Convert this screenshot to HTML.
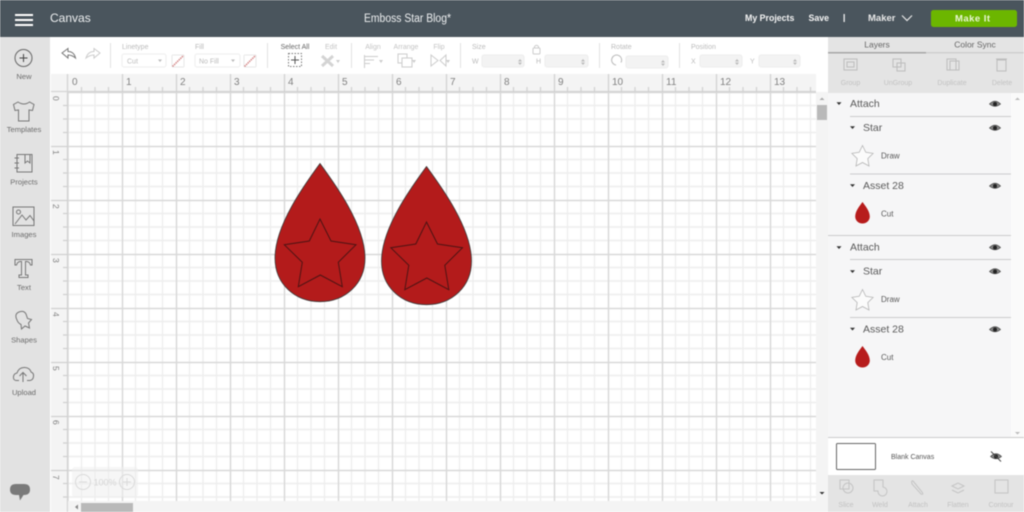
<!DOCTYPE html>
<html><head><meta charset="utf-8"><style>
html,body{margin:0;padding:0;width:1024px;height:512px;overflow:hidden;background:#fff}
svg{display:block;font-family:"Liberation Sans",sans-serif;filter:blur(.4px)}
.n{font-size:7.6px;fill:#6c6c6c;text-anchor:middle}
.t{font-size:7px;fill:#bbb}
.d{font-size:7px;fill:#c4c4c4;text-anchor:middle}
.ic{fill:none;stroke:#777;stroke-width:1}
.la{font-size:10.5px;fill:#5a5a5a}
.lb{font-size:8px;fill:#5a5a5a}
</style></head><body>
<svg width="1024" height="512" viewBox="0 0 1024 512" xmlns="http://www.w3.org/2000/svg">
<defs>
<g id="eye"><path d="M-5.500 0Q0 -5.500 5.500 0Q0 4.500 -5.500 0Z" fill="#888" stroke="#444" stroke-width=".7"/><circle r="2" fill="#222"/></g>
<path id="tri" d="M-2.500 -1.300H2.500L0 1.500Z" fill="#333"/>
<path id="starS" d="M0 -10L3.300 -3.200L10.600 -2.100L5.300 3.100L6.500 10.500L0 7L-6.500 10.500L-5.300 3.100L-10.600 -2.100L-3.300 -3.200Z" fill="#fbfbfb" stroke="#b5b5b5" stroke-width=".8"/>
<path id="dropS" d="M0 -11C-2.500 -7.500 -7.300 -2 -7.300 3.500C-7.300 7.500 -4 10.500 0 10.500C4 10.500 7.300 7.500 7.300 3.500C7.300 -2 2.500 -7.500 0 -11Z" fill="#b71c1c"/>
</defs>

<!-- canvas -->
<rect x="51" y="74" width="765" height="438" fill="#fff"/>
<path stroke="#eeeeee" stroke-width="1.400" fill="none" d="M81.500 92V512M95 92V512M108.500 92V512M135.500 92V512M149 92V512M162.500 92V512M189.500 92V512M203 92V512M216.500 92V512M243.500 92V512M257 92V512M270.500 92V512M297.500 92V512M311 92V512M324.500 92V512M351.500 92V512M365 92V512M378.500 92V512M405.500 92V512M419 92V512M432.500 92V512M459.500 92V512M473 92V512M486.500 92V512M513.500 92V512M527 92V512M540.500 92V512M567.500 92V512M581 92V512M594.500 92V512M621.500 92V512M635 92V512M648.500 92V512M675.500 92V512M689 92V512M702.500 92V512M729.500 92V512M743 92V512M756.500 92V512M783.500 92V512M797 92V512M810.500 92V512
M68 105.500H816M68 119H816M68 132.500H816M68 159.500H816M68 173H816M68 186.500H816M68 213.500H816M68 227H816M68 240.500H816M68 267.500H816M68 281H816M68 294.500H816M68 321.500H816M68 335H816M68 348.500H816M68 375.500H816M68 389H816M68 402.500H816M68 429.500H816M68 443H816M68 456.500H816M68 483.500H816M68 497H816"/>
<path stroke="#d9d9d9" stroke-width="1.500" fill="none" d="M68 92V512M122.500 92V512M176.500 92V512M230.500 92V512M284.500 92V512M338.500 92V512M392.500 92V512M446.500 92V512M500.500 92V512M554.500 92V512M608.500 92V512M662.500 92V512M716.500 92V512M770.500 92V512
M68 92.500H816M68 146.500H816M68 200.500H816M68 254.500H816M68 308.500H816M68 362.500H816M68 416.500H816M68 470.500H816"/>

<!-- rulers -->
<rect x="51" y="74" width="765" height="18" fill="#f4f4f4"/>
<rect x="51" y="74" width="17" height="438" fill="#f4f4f4"/>
<path stroke="#d4d4d4" stroke-width="1.300" fill="none" d="M51 91.500H816M67.500 74V512"/>
<path stroke="#d0d0d0" stroke-width="1.200" fill="none" d="M122.500 74V92M176.500 74V92M230.500 74V92M284.500 74V92M338.500 74V92M392.500 74V92M446.500 74V92M500.500 74V92M554.500 74V92M608.500 74V92M662.500 74V92M716.500 74V92M770.500 74V92
M81.500 87V92M95 87V92M108.500 87V92M135.500 87V92M149 87V92M162.500 87V92M189.500 87V92M203 87V92M216.500 87V92M243.500 87V92M257 87V92M270.500 87V92M297.500 87V92M311 87V92M324.500 87V92M351.500 87V92M365 87V92M378.500 87V92M405.500 87V92M419 87V92M432.500 87V92M459.500 87V92M473 87V92M486.500 87V92M513.500 87V92M527 87V92M540.500 87V92M567.500 87V92M581 87V92M594.500 87V92M621.500 87V92M635 87V92M648.500 87V92M675.500 87V92M689 87V92M702.500 87V92M729.500 87V92M743 87V92M756.500 87V92M783.500 87V92M797 87V92M810.500 87V92
M51 146.500H68M51 200.500H68M51 254.500H68M51 308.500H68M51 362.500H68M51 416.500H68M51 470.500H68
M63 105.500H68M63 119H68M63 132.500H68M63 159.500H68M63 173H68M63 186.500H68M63 213.500H68M63 227H68M63 240.500H68M63 267.500H68M63 281H68M63 294.500H68M63 321.500H68M63 335H68M63 348.500H68M63 375.500H68M63 389H68M63 402.500H68M63 429.500H68M63 443H68M63 456.500H68M63 483.500H68M63 497H68"/>
<g font-size="10" fill="#808080">
<text x="72" y="85">0</text><text x="126" y="85">1</text><text x="180" y="85">2</text><text x="234" y="85">3</text><text x="288" y="85">4</text><text x="342" y="85">5</text><text x="396" y="85">6</text><text x="450" y="85">7</text><text x="504" y="85">8</text><text x="558" y="85">9</text><text x="612" y="85">10</text><text x="666" y="85">11</text><text x="720" y="85">12</text><text x="774" y="85">13</text>
</g>
<g font-size="8.500" fill="#808080">
<text transform="translate(53,96) rotate(90)">0</text><text transform="translate(53,150) rotate(90)">1</text><text transform="translate(53,204) rotate(90)">2</text><text transform="translate(53,258) rotate(90)">3</text><text transform="translate(53,312) rotate(90)">4</text><text transform="translate(53,366) rotate(90)">5</text><text transform="translate(53,420) rotate(90)">6</text><text transform="translate(53,475) rotate(90)">7</text>
</g>

<!-- design -->
<g stroke="#3a3a3a" stroke-width=".8" fill="#b31b1b">
<path d="M320 163.500C305 184 275 225 275 258C275 284 295 301.700 320 301.700C345 301.700 365 284 365 258C365 225 335 184 320 163.500Z"/>
<path transform="translate(106.500,3)" d="M320 163.500C305 184 275 225 275 258C275 284 295 301.700 320 301.700C345 301.700 365 284 365 258C365 225 335 184 320 163.500Z"/>
</g>
<g stroke="#4e1414" stroke-width="1" fill="none">
<path d="M320 219L331 241L356 244.700L338.300 262.300L342.300 286.700L320.300 275L298.300 286.700L302.300 262.300L284.300 244.700L309.300 241Z"/>
<path transform="translate(106.500,3)" d="M320 219L331 241L356 244.700L338.300 262.300L342.300 286.700L320.300 275L298.300 286.700L302.300 262.300L284.300 244.700L309.300 241Z"/>
</g>

<!-- zoom overlay -->
<rect x="72" y="467" width="66" height="30" rx="3" fill="#eee" opacity=".55"/>
<g fill="none" stroke="#dadada"><circle cx="83" cy="482" r="7.500"/><circle cx="127" cy="482" r="7.500"/><path d="M79 482H87M123 482H131M127 478V486"/></g>
<text x="105" y="485.500" font-size="9" fill="#d6d6d6" text-anchor="middle">100%</text>

<!-- h scrollbar -->
<rect x="68" y="501" width="748" height="11" fill="#f4f4f4"/>
<rect x="81" y="503" width="52" height="9" fill="#b9b9b9"/>
<path d="M75 507L78 504.500V509.500Z" fill="#888"/>

<!-- v scrollbar -->
<rect x="816" y="92" width="12" height="420" fill="#f4f4f4"/>
<rect x="817" y="105" width="10" height="15" fill="#b9b9b9"/>
<path d="M822 97.500L819.500 100H824.500Z" fill="#aaa"/>
<path d="M822 494.500L819.500 492H824.500Z" fill="#333"/>

<!-- left sidebar -->
<rect x="0" y="37" width="50" height="475" fill="#e2e2e2"/>
<circle cx="23.500" cy="58" r="8.500" fill="none" stroke="#666" stroke-width="1"/>
<path d="M19.500 58H27.500M23.500 54V62" stroke="#444" fill="none"/>
<text class="n" x="24" y="79">New</text>
<path class="ic" d="M18 102L13.500 104.500L15 110.500L18.500 110V121H29V110L32.500 110.500L34 104.500L29.500 102Q24 106 18 102Z"/>
<text class="n" x="24" y="132">Templates</text>
<path class="ic" d="M17 154.500H32V172H17ZM25 154.500V163L27.500 161L30 163V154.500M14.500 158H19M14.500 163H19M14.500 168H19"/>
<text class="n" x="24" y="184.500">Projects</text>
<rect class="ic" x="13" y="207" width="21" height="18.500"/>
<circle class="ic" cx="18.500" cy="212" r="2"/>
<path class="ic" d="M15 224L22 215L26 220L30 215.500L34 221"/>
<text class="n" x="24" y="237">Images</text>
<path class="ic" d="M15 259.500H32V265H30.500Q29.500 261.500 26.500 261.500H25.500V275H28V277.500H19V275H21.500V261.500H20.500Q17.500 261.500 16.500 265H15Z"/>
<text class="n" x="24" y="290">Text</text>
<path class="ic" d="M17 320Q14 314 19 312Q24 310 26 314L27.500 318.500L31.500 319.500L28.500 323L29.500 328L25 326L21.500 329L21 324.500Q18 323 17 320Z"/>
<text class="n" x="24" y="342.500">Shapes</text>
<path class="ic" d="M19 380.500H16Q13 380 13.500 376.500Q14 373.500 17 373Q19 367 25 367.500Q30 368 31 372Q34 373 33.500 376.500Q33 380 30 380.500H27M23 382V373M19.500 376L23 372.500L26.500 376"/>
<text class="n" x="24" y="395">Upload</text>
<path d="M16 484H24Q30 484 30 489.500Q30 495 24 495H23.500L20 500.500L19 495H16Q10 495 10 489.500Q10 484 16 484Z" fill="#7a7a7a"/>

<!-- toolbar -->
<rect x="50" y="37" width="778" height="37" fill="#fff"/>
<path d="M110.500 43V68M267.500 43V68M351.500 43V68M460.500 43V68M599.500 43V68M679.500 43V68" stroke="#e2e2e2" fill="none"/>
<path d="M62 53L68 48.500V51.500Q74 51.500 75.500 58Q72 55 68 55V58Z" fill="#fff" stroke="#777"/>
<path d="M100 53L94 48.500V51.500Q88 51.500 86 58Q90 55 94 55V58Z" fill="#fff" stroke="#ccc"/>
<text class="t" x="122" y="49">Linetype</text>
<rect x="122" y="54" width="44" height="13" rx="2" fill="#fff" stroke="#eee"/>
<text class="t" x="127" y="63.500">Cut</text>
<path d="M158 59.500H162L160 62Z" fill="#bbb"/>
<rect x="172" y="55" width="12" height="12" rx="1" fill="#fff" stroke="#e8e8e8"/>
<path d="M172.500 66.500L183.500 55.500" stroke="#d58a8a" stroke-width="1.500" stroke-dasharray="1.500 .7"/>
<text class="t" x="195" y="49">Fill</text>
<rect x="195" y="54" width="45" height="13" rx="2" fill="#fff" stroke="#eee"/>
<text class="t" x="199" y="63.500">No Fill</text>
<path d="M231 59.500H235L233 62Z" fill="#bbb"/>
<rect x="244" y="55" width="12" height="12" rx="1" fill="#fff" stroke="#e8e8e8"/>
<path d="M244.500 66.500L255.500 55.500" stroke="#d58a8a" stroke-width="1.500" stroke-dasharray="1.500 .7"/>
<text x="295" y="49" font-size="7" fill="#666" text-anchor="middle">Select All</text>
<rect x="288.500" y="53.500" width="13" height="13" fill="none" stroke="#777" stroke-dasharray="1.500 1.500"/>
<path d="M291 60H299M295 56V64" stroke="#555" fill="none"/>
<text class="d" x="331" y="49">Edit</text>
<path d="M322 56L333 66M333 56L322 66" stroke="#d4d4d4" stroke-width="3" fill="none"/>
<path d="M336 60H340L338 63Z" fill="#ccc"/>
<text class="d" x="373" y="49">Align</text>
<path d="M365 56.500H378M365 60H374M365 63.500H370M364.500 55V68" stroke="#ccc" fill="none"/>
<path d="M379 60H383L381 63Z" fill="#ccc"/>
<text class="d" x="406" y="49">Arrange</text>
<rect x="398" y="54" width="9" height="9" fill="none" stroke="#ccc"/><rect x="402" y="58" width="10" height="9" fill="#fff" stroke="#ccc"/>
<path d="M412 60H416L414 63Z" fill="#ccc"/>
<text class="d" x="439" y="49">Flip</text>
<path d="M431 55V66L438 60.500ZM446 55V66L440 60.500Z" fill="none" stroke="#ccc"/>
<path d="M446 60H450L448 63Z" fill="#ccc"/>
<text class="t" x="472" y="49">Size</text>
<text class="t" x="472" y="63.500">W</text>
<rect x="482" y="55" width="42" height="12" rx="2" fill="#f3f3f3" stroke="#eee"/>
<path d="M520 59L518 61.500H522ZM520 65L518 62.500H522Z" fill="#bbb"/>
<rect x="533" y="48" width="7" height="6" rx="1" fill="none" stroke="#ccc"/><path d="M534.500 48V46.500Q536.500 44 538.500 46.500V48" fill="none" stroke="#ccc"/>
<text class="t" x="536" y="63.500">H</text>
<rect x="545" y="55" width="43" height="12" rx="2" fill="#f3f3f3" stroke="#eee"/>
<path d="M583 59L581 61.500H585ZM583 65L581 62.500H585Z" fill="#bbb"/>
<text class="t" x="611" y="49">Rotate</text>
<path d="M621 62.500A5 5 0 1 0 616 65" fill="none" stroke="#bbb"/>
<rect x="626" y="56" width="42" height="12" rx="2" fill="#f3f3f3" stroke="#eee"/>
<path d="M663 60L661 62.500H665ZM663 66L661 63.500H665Z" fill="#bbb"/>
<text class="t" x="691" y="49">Position</text>
<text class="t" x="691" y="63.500">X</text>
<rect x="700" y="55" width="42" height="12" rx="2" fill="#f3f3f3" stroke="#eee"/>
<path d="M737 59L735 61.500H739ZM737 65L735 62.500H739Z" fill="#bbb"/>
<text class="t" x="750" y="63.500">Y</text>
<rect x="759" y="55" width="41" height="12" rx="2" fill="#f3f3f3" stroke="#eee"/>
<path d="M795 59L793 61.500H797ZM795 65L793 62.500H797Z" fill="#bbb"/>

<!-- header -->
<rect x="0" y="0" width="1024" height="37" fill="#4a555d"/>
<rect x="15" y="14" width="18" height="2" fill="#fff"/><rect x="15" y="19" width="18" height="2" fill="#fff"/><rect x="15" y="24" width="18" height="2" fill="#fff"/>
<text x="50" y="22" font-size="12" fill="#eef0f1">Canvas</text>
<text x="364" y="22" font-size="11.500" fill="#eef0f1" textLength="87" lengthAdjust="spacingAndGlyphs">Emboss Star Blog*</text>
<text x="745" y="21" font-size="8.800" font-weight="bold" fill="#f4f4f4">My Projects</text>
<text x="808.500" y="21" font-size="8.800" font-weight="bold" fill="#f4f4f4">Save</text>
<rect x="843.500" y="14" width="1.300" height="8" fill="#eee"/>
<text x="868" y="21" font-size="9.500" font-weight="bold" fill="#e8e8e8">Maker</text>
<path d="M902 15.500L907 20.500L912 15.500" fill="none" stroke="#e8e8e8" stroke-width="1.200"/>
<rect x="931" y="10" width="86" height="17" rx="2.500" fill="#6cb600"/>
<text x="955" y="21.500" font-size="9.500" fill="#eaf6d6" font-weight="bold" textLength="35">Make It</text>

<!-- right panel -->
<rect x="828" y="37" width="196" height="475" fill="#f6f6f7"/>
<rect x="828" y="37" width="196" height="56" fill="#e4e4e4"/>
<rect x="828" y="52" width="98" height="1.500" fill="#a6a6a6"/>
<rect x="926" y="52" width="98" height="1.500" fill="#cfcfcf"/>
<text x="877" y="47.500" font-size="8.500" fill="#666" text-anchor="middle">Layers</text>
<text x="975" y="47.500" font-size="8.500" fill="#666" text-anchor="middle">Color Sync</text>
<g fill="none" stroke="#bdbdbd">
<rect x="844" y="59" width="13" height="11"/><rect x="847" y="62" width="7" height="5"/>
<rect x="893" y="59" width="8" height="8"/><rect x="897" y="63" width="8" height="8"/>
<rect x="947" y="59" width="9" height="11"/><rect x="950" y="61" width="9" height="9"/>
<rect x="997" y="60" width="9" height="11"/><path d="M996 59H1007"/>
</g>
<g font-size="7" fill="#c2c2c2" text-anchor="middle">
<text x="850.500" y="85">Group</text><text x="898" y="85">UnGroup</text><text x="952" y="85">Duplicate</text><text x="1002" y="85">Delete</text>
</g>
<rect x="1011" y="93" width="13" height="345" fill="#fafafa"/>
<path d="M1017.500 97.500L1015 100H1020Z" fill="#bbb"/>
<path d="M1017.500 434.500L1015 432H1020Z" fill="#bbb"/>

<!-- layers -->
<use href="#tri" x="839" y="103.500"/><text class="la" x="850" y="107">Attach</text><use href="#eye" x="995" y="104"/>
<path d="M850 116.500H1011" stroke="#ccc" fill="none"/>
<use href="#tri" x="852.500" y="127.500"/><text class="la" x="863" y="131">Star</text><use href="#eye" x="995" y="128"/>
<use href="#starS" x="862.500" y="155.500"/><text class="lb" x="881" y="158.500">Draw</text>
<path d="M850 174H1011" stroke="#ccc" fill="none"/>
<use href="#tri" x="852.500" y="185.500"/><text class="la" x="863" y="189">Asset 28</text><use href="#eye" x="995" y="186"/>
<use href="#dropS" x="862.500" y="213"/><text class="lb" x="881" y="216.500">Cut</text>
<path d="M828 235.500H1011" stroke="#ccc" fill="none"/>

<use href="#tri" x="839" y="247.500"/><text class="la" x="850" y="250.500">Attach</text><use href="#eye" x="995" y="247.500"/>
<path d="M850 259.500H1011" stroke="#ccc" fill="none"/>
<use href="#tri" x="852.500" y="271.500"/><text class="la" x="863" y="274.500">Star</text><use href="#eye" x="995" y="271.500"/>
<use href="#starS" x="862.500" y="299.500"/><text class="lb" x="881" y="302">Draw</text>
<path d="M850 317.500H1011" stroke="#ccc" fill="none"/>
<use href="#tri" x="852.500" y="329"/><text class="la" x="863" y="332.500">Asset 28</text><use href="#eye" x="995" y="329.500"/>
<use href="#dropS" x="862.500" y="357"/><text class="lb" x="881" y="360">Cut</text>

<!-- blank canvas -->
<rect x="828" y="437" width="196" height="38" fill="#fff"/>
<path d="M828 437.500H1024" stroke="#ccc" fill="none"/>
<rect x="836.500" y="443.500" width="39" height="26" rx="1" fill="#fff" stroke="#666"/>
<text x="891" y="459" font-size="7" fill="#555">Blank Canvas</text>
<use href="#eye" x="996" y="456.500"/>
<path d="M991 451.500L1001 461.500" stroke="#444" fill="none"/>

<!-- bottom tools -->
<rect x="828" y="475" width="196" height="37" fill="#e4e4e4"/>
<g fill="none" stroke="#c4c4c4">
<rect x="840" y="480" width="9" height="9"/><circle cx="848" cy="488" r="5"/>
<path d="M874 480H883V487A4.500 4.500 0 1 1 878 491H874Z"/>
<path d="M913 481L922 492Q924 495 921 494L912 484Q911 480 913 481Z"/>
<path d="M952 486L958 483L964 486L958 489ZM952 490L958 493L964 490"/>
<rect x="995" y="480" width="13" height="13"/>
</g>
<g font-size="7" fill="#c2c2c2" text-anchor="middle">
<text x="846" y="507">Slice</text><text x="880" y="507">Weld</text><text x="918" y="507">Attach</text><text x="958" y="507">Flatten</text><text x="1001" y="507">Contour</text>
</g>
</svg>
</body></html>
